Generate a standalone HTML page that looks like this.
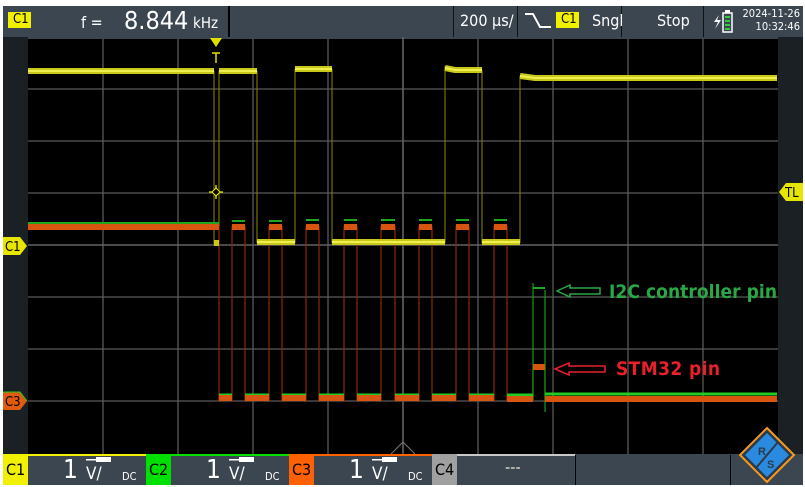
<!DOCTYPE html>
<html><head><meta charset="utf-8"><style>
*{margin:0;padding:0;box-sizing:border-box}
body{width:805px;height:487px;background:#fff;position:relative;overflow:hidden;font-family:"Liberation Sans",sans-serif}
.a{position:absolute}
.t{position:absolute;color:#fff;white-space:nowrap;font-family:"DejaVu Sans Condensed","Liberation Sans",sans-serif}
</style></head><body>
<div class="a" style="left:3px;top:6px;width:800px;height:31px;background:#3b4650"></div>
<div class="a" style="left:228px;top:6px;width:2px;height:31px;background:#000"></div>
<div class="a" style="left:453px;top:6px;width:1px;height:31px;background:#111"></div>
<div class="a" style="left:517px;top:6px;width:1px;height:31px;background:#111"></div>
<div class="a" style="left:621px;top:6px;width:1px;height:31px;background:#111"></div>
<div class="a" style="left:703px;top:6px;width:1px;height:31px;background:#111"></div>
<div class="a" style="left:8px;top:12px;width:23px;height:16px;background:#f0f000"></div>
<div class="t" style="left:13px;top:12px;font-size:13px;color:#000">C1</div>
<div class="t" style="left:81px;top:13px;font-size:16px">f =</div>
<div class="t" style="left:124px;top:6px;font-size:25px">8.844</div>
<div class="t" style="left:193px;top:14px;font-size:15px">kHz</div>
<div class="t" style="left:460px;top:11px;font-size:16px">200 µs/</div>
<svg class="a" style="left:524px;top:12px" width="28" height="18"><path d="M1 2H9L16 15H27" stroke="#fff" stroke-width="2" fill="none"/></svg>
<div class="a" style="left:556px;top:12px;width:23px;height:16px;background:#f0f000"></div>
<div class="t" style="left:561px;top:12px;font-size:13px;color:#000">C1</div>
<div class="t" style="left:592px;top:11px;font-size:16px">Sngl</div>
<div class="t" style="left:657px;top:11px;font-size:16px">Stop</div>
<svg class="a" style="left:712px;top:9px" width="22" height="24"><path d="M7 6L2 13H6L3 20L9 11H5Z" fill="#fff"/><rect x="11" y="4" width="9" height="19" fill="none" stroke="#fff" stroke-width="1.5"/><rect x="13" y="1" width="5" height="3" fill="#fff"/><g fill="#2ecc40"><rect x="13" y="7" width="5" height="2"/><rect x="13" y="11" width="5" height="2"/><rect x="13" y="15" width="5" height="2"/><rect x="13" y="19" width="5" height="2"/></g></svg>
<div class="t" style="left:740px;top:7px;font-size:11px;line-height:13px;text-align:right;width:60px">2024-11-26<br>10:32:46</div>
<div class="a" style="left:3px;top:37px;width:25px;height:417px;background:#1b2024"></div>
<div class="a" style="left:778px;top:37px;width:25px;height:417px;background:#1b2024"></div>
<svg class="a" style="left:0;top:0" width="805" height="487">
<rect x="28" y="37" width="750" height="417" fill="#000"/>
<g stroke="#5a5a5a" stroke-width="1.3">
<path d="M103 37V454M178 37V454M253 37V454M328 37V454M403 37V454M478 37V454M553 37V454M628 37V454M703 37V454"/>
<path d="M28 89H778M28 141H778M28 193H778M28 245H778M28 297H778M28 349H778M28 401H778"/>
</g>
<path d="M28 38H778" stroke="#3b4650" stroke-width="2"/>
<path d="M403 37V454M28 245H778" stroke="#6a6a6a" stroke-width="1.3"/>
<path d="M391 454L403 442L415 454" stroke="#777" fill="none"/>
<g stroke="#8a8a00" stroke-width="1">
<path d="M214 71V244M219 71V244M257 71V243M295 69V243M332 69V243M445 66V243M482 70V243M520 76V243"/>
</g>
<g stroke="#8b2a00" stroke-width="1.2">
<path d="M219 226V402M232 226V402M245 226V402M269 226V402M282 226V402M306 226V402M319 226V402M344 226V402M357 226V402M381 226V402M395 226V402M419 226V402M432 226V402M456 226V402M469 226V402M494 226V402M507 226V402M533 367V400M545 367V400"/>
</g>
<path d="M533 283V400M545 290V412" stroke="#10a010" stroke-width="1.2"/>
<g stroke="#c8c818" stroke-width="6" fill="none">
<path d="M28 71H214M219 71H257M295 69H332M445 68L455 70H482M520 76L535 78H777"/>
<path d="M257 242H295M332 242H445M482 242H520M214 243H219" />
</g>
<g stroke="#eeee50" stroke-width="2" fill="none">
<path d="M28 71H214M219 71H257M295 69H332M445 68L455 70H482M520 76L535 78H777M257 242H295M332 242H445M482 242H520"/>
</g>
<g stroke="#1fa81f" stroke-width="2" fill="none">
<path d="M28 223H219M232 221H245M269 221H282M306 220H319M344 220H357M381 220H395M419 220H432M456 220H469M494 220H507M533 288H545"/>
<path d="M219 395H232M245 395H269M282 395H306M319 395H344M357 395H381M395 395H419M432 395H456M469 395H494M507 395H533M545 394H777" stroke-width="3" stroke="#22cc22"/>
</g>
<g stroke="#d85510" stroke-width="6" fill="none">
<path d="M28 227H219M232 227H245M269 227H282M306 227H319M344 227H357M381 227H395M419 227H432M456 227H469M494 227H507M533 367H545"/>
<path d="M219 398H232M245 398H269M282 398H306M319 398H344M357 398H381M395 398H419M432 398H456M469 398H494M507 399H533M545 399H777"/>
</g>
<path d="M210 38H222L216 47Z" fill="#e0e000"/>
<path d="M212 53H220M216 53V63" stroke="#e0e000" stroke-width="1.5"/>
<path d="M216 185V199M209 192H223" stroke="#f0f000" stroke-width="1.3"/>
<path d="M216 188L220 192L216 196L212 192Z" fill="#000" stroke="#f0f000"/>
<path d="M3 237H20L27 246L20 255H3Z" fill="#e6e600"/>
<text x="5" y="251" font-size="13" fill="#000" font-family="DejaVu Sans Condensed,Liberation Sans,sans-serif">C1</text>
<path d="M3 392H20L27 401L20 410H3Z" fill="#e05a10"/>
<path d="M3 392H20L27 401" stroke="#22cc22" fill="none"/>
<text x="5" y="406" font-size="13" fill="#000" font-family="DejaVu Sans Condensed,Liberation Sans,sans-serif">C3</text>
<path d="M803 183H786L779 192L786 201H803Z" fill="#e6e600"/>
<text x="785" y="197" font-size="13" fill="#000" font-family="DejaVu Sans Condensed,Liberation Sans,sans-serif">TL</text>
<path d="M557 291L570 285V288H600V294H570V297Z" fill="none" stroke="#2aa845" stroke-width="1.5"/>
<text x="609" y="298" font-size="19" font-weight="bold" fill="#2aa845" font-family="DejaVu Sans Condensed,Liberation Sans,sans-serif" textLength="168">I2C controller pin</text>
<path d="M555 369L569 363V366H605V372H569V375Z" fill="none" stroke="#e8202a" stroke-width="1.5"/>
<text x="616" y="375" font-size="19" font-weight="bold" fill="#e8202a" font-family="DejaVu Sans Condensed,Liberation Sans,sans-serif" textLength="104">STM32 pin</text>
</svg>
<div class="a" style="left:3px;top:454px;width:800px;height:31px;background:#3b4650"></div>
<div class="a" style="left:3px;top:454px;width:25px;height:31px;background:#f0f000"></div>
<div class="a" style="left:28px;top:454px;width:118px;height:2px;background:#f0f000"></div>
<div class="a" style="left:146px;top:454px;width:25px;height:31px;background:#00e000"></div>
<div class="a" style="left:171px;top:454px;width:118px;height:2px;background:#00e000"></div>
<div class="a" style="left:289px;top:454px;width:25px;height:31px;background:#ff6000"></div>
<div class="a" style="left:314px;top:454px;width:118px;height:2px;background:#ff6000"></div>
<div class="a" style="left:432px;top:454px;width:25px;height:31px;background:#a0a0a0"></div>
<div class="a" style="left:457px;top:454px;width:118px;height:2px;background:#c8c8c8"></div>
<div class="a" style="left:575px;top:455px;width:1px;height:30px;background:#000"></div>
<div class="a" style="left:730px;top:455px;width:1px;height:30px;background:#000"></div>
<div class="t" style="left:6px;top:460px;font-size:16px;color:#000">C1</div>
<div class="t" style="left:149px;top:460px;font-size:16px;color:#000">C2</div>
<div class="t" style="left:292px;top:460px;font-size:16px;color:#000">C3</div>
<div class="t" style="left:435px;top:460px;font-size:16px;color:#000">C4</div>
<div class="t" style="left:63px;top:455px;font-size:26px">1</div>
<div class="t" style="left:86px;top:464px;font-size:17px">V/</div>
<div class="t" style="left:122px;top:470px;font-size:11px">DC</div>
<div class="t" style="left:206px;top:455px;font-size:26px">1</div>
<div class="t" style="left:229px;top:464px;font-size:17px">V/</div>
<div class="t" style="left:265px;top:470px;font-size:11px">DC</div>
<div class="t" style="left:349px;top:455px;font-size:26px">1</div>
<div class="t" style="left:372px;top:464px;font-size:17px">V/</div>
<div class="t" style="left:408px;top:470px;font-size:11px">DC</div>
<div class="t" style="left:505px;top:460px;font-size:14px;color:#aaa;font-weight:bold">---</div>
<svg class="a" style="left:0;top:0" width="805" height="487">
<g fill="#fff"><path d="M86 459H96V457H111V462H96V460.5H86Z"/><path d="M229 459H239V457H254V462H239V460.5H229Z"/><path d="M372 459H382V457H397V462H382V460.5H372Z"/></g>
<path d="M767 428L794 455L767 482L740 455Z" fill="#2b3a4a" stroke="#f59a20" stroke-width="2"/>
<path d="M767 433L789 455L767 477L745 455Z" fill="#2a8ae0"/>
<path d="M756 468L778 442" stroke="#2b3a4a" stroke-width="2"/>
<text x="758" y="455" font-size="11" fill="#2b3a4a" font-weight="bold">R</text>
<text x="767" y="468" font-size="11" fill="#2b3a4a" font-weight="bold">S</text>
</svg>
</body></html>
